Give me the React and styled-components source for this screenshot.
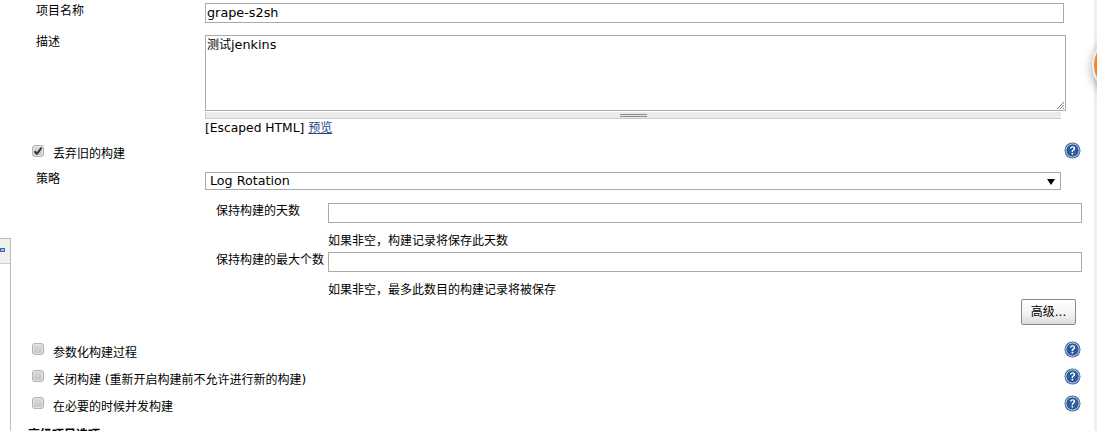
import styled, { createGlobalStyle } from "styled-components"

const Global = createGlobalStyle`
html,body{
    margin:0;
    padding:0;
    background:#fff;
    height:431px;
    overflow:hidden;
}
`
const Page = styled.div`
    position:relative;
    width:1097px;
    height:431px;
    overflow:hidden;
    color:#000;
    font-family:"DejaVu Sans","Noto Sans CJK SC",sans-serif;
    font-size:12px;
    line-height:16px;
`
const Form = styled.div`
    display:flex;
    flex-direction:column;
    padding:3px 0 0 0;
`
const Row = styled.div`
    display:grid;
    grid-template-columns:205px 1fr;
    margin-top:${p => p.$top || 0}px;
`
const Label = styled.div`
    padding-left:36px;
    margin-top:${p => p.$top || 0}px;
`
const Latin = styled.span`
    font-size:${p => p.$size || 12.8}px;
`
const TextInput = styled.div`
    box-sizing:border-box;
    width:${p => p.$width}px;
    height:${p => p.$height || 20}px;
    border:1px solid #aaa;
    padding:1px 1px;
    background:#fff;
    position:relative;
`
const Grip = styled.svg`
    position:absolute;
    right:0;
    bottom:0;
`
const Handle = styled.div`
    box-sizing:border-box;
    width:856px;
    height:7px;
    margin-top:1px;
    background:#ebebeb;
    border:1px solid #ccc;
    border-top-color:#ebebeb;
    border-width:1px 0 1px 1px;
    display:flex;
    align-items:center;
    justify-content:center;
    &::after{
        content:"";
        width:27px;
        height:1px;
        border-top:1px solid #888;
        border-bottom:1px solid #888;
    }
`
const Note = styled.div`
    margin-top:1px;
    line-height:16px;
`
const Link = styled.a`
    color:#204a87;
    text-decoration:underline;
`
const CheckRow = styled.div`
    display:flex;
    align-items:flex-start;
    height:20px;
    width:1081px;
    padding-left:32px;
    box-sizing:border-box;
    margin-top:${p => p.$top || 0}px;
`
const Box = styled.span`
    box-sizing:border-box;
    width:12px;
    height:12px;
    margin-top:${p => p.$checked ? 1 : 0}px;
    border:1px solid #b0b0b0;
    border-radius:3px;
    background:linear-gradient(#dcdcdc,#c4c4c4);
    box-shadow:inset 0 0 0 1px #e4e4e4;
    display:flex;
    align-items:center;
    justify-content:center;
    flex:none;
`
const CheckLabel = styled.span`
    margin-left:9px;
    margin-top:2px;
    flex:1;
`
const Select = styled.div`
    box-sizing:border-box;
    width:856px;
    height:18px;
    border:1px solid #aaa;
    padding:0 4px;
    display:flex;
    align-items:center;
    justify-content:space-between;
`
const Arrow = styled.span`
    width:0;
    height:0;
    margin:1px 1px 0 0;
    border-left:4px solid transparent;
    border-right:4px solid transparent;
    border-top:6px solid #000;
`
const SubRow = styled.div`
    display:grid;
    grid-template-columns:123px 1fr;
    margin-left:205px;
    margin-top:${p => p.$top || 0}px;
`
const SubLabel = styled.div`
    padding-left:11px;
    white-space:nowrap;
`
const Hint = styled.div`
    margin-left:328px;
    margin-top:10px;
`
const ButtonRow = styled.div`
    display:flex;
    justify-content:flex-end;
    width:1076px;
    margin-top:1px;
`
const Button = styled.div`
    box-sizing:border-box;
    width:55px;
    height:26px;
    border:1px solid #888;
    border-radius:2px;
    background:linear-gradient(#fff 0%,#f4f4f4 55%,#dcdcdc 100%);
    display:flex;
    align-items:center;
    justify-content:center;
`
const SectionTitle = styled.div`
    margin:10px 0 0 28px;
    font-weight:bold;
`
const SideFrame = styled.div`
    position:absolute;
    left:-1px;
    top:238px;
    width:11px;
    height:193px;
    border:1px solid #bbb;
    border-left:none;
    border-bottom:none;
`
const SideHead = styled.div`
    height:24px;
    background:#f0f0f0;
    border-bottom:1px solid #ccc;
    position:relative;
    &::after{
        content:"";
        position:absolute;
        left:1px;
        top:9px;
        width:3px;
        height:2px;
        border:1px solid #3b6cb0;
        background:#9fbbe0;
    }
`
const Strip = styled.div`
    position:absolute;
    top:0;
    right:0;
    width:3px;
    height:431px;
    background:#efefef;
`
const Orange = styled.div`
    position:absolute;
    left:1092px;
    top:35px;
    width:60px;
    height:60px;
    border-radius:50%;
    background:#f58220;
    border:2px solid #eee;
    box-sizing:border-box;
    box-shadow:-1px 3px 8px rgba(0,0,0,.3);
`
const HelpIcon = styled.svg`
    flex:none;
    margin-top:-2px;
`

const Help = () => (
    <HelpIcon width="17" height="17" viewBox="0 0 17 17">
        <circle cx="8.5" cy="8.5" r="8" fill="#3c66a4" />
        <circle cx="8.5" cy="8.5" r="6.6" fill="#2f5a9a" stroke="#c5d3e6" strokeWidth="1" />
        <path d="M5.9 6.6c0-1.5 1.2-2.4 2.7-2.4 1.5 0 2.6.9 2.6 2.2 0 1.1-.6 1.6-1.4 2.2-.6.4-.8.7-.8 1.4H7.6c0-1.1.3-1.7 1-2.2.6-.5 1-.8 1-1.4 0-.5-.4-.9-1-.9-.7 0-1.1.4-1.1 1z" fill="#fff" />
        <rect x="7.6" y="10.8" width="1.6" height="1.7" fill="#fff" />
    </HelpIcon>
)

const Check = () => (
    <svg width="10" height="10" viewBox="0 0 10 10">
        <path d="M1.5 5.2l2.4 2.6L8.6 1.6" fill="none" stroke="#333" strokeWidth="2" />
    </svg>
)

const App = () => {
    return(
        <Page>
            <Global />
            <Form>
                <Row>
                    <Label>项目名称</Label>
                    <TextInput $width={859}><Latin>grape-s2sh</Latin></TextInput>
                </Row>
                <Row $top={12}>
                    <Label $top={-1}>描述</Label>
                    <div>
                        <TextInput $width={861} $height={76}>
                            测试<Latin>jenkins</Latin>
                            <Grip width="9" height="9" viewBox="0 0 9 9">
                                <path d="M1 8L8 1M4 8L8 4M7 8L8 7" stroke="#777" fill="none" />
                            </Grip>
                        </TextInput>
                        <Handle />
                        <Note>
                            <Latin $size={12.3}>[Escaped HTML]</Latin> <Link>预览</Link>
                        </Note>
                    </div>
                </Row>
                <CheckRow $top={8}>
                    <Box $checked><Check /></Box>
                    <CheckLabel>丢弃旧的构建</CheckLabel>
                    <Help />
                </CheckRow>
                <Row $top={8}>
                    <Label $top={-1}>策略</Label>
                    <Select><Latin $size={12.7}>Log Rotation</Latin><Arrow /></Select>
                </Row>
                <SubRow $top={13}>
                    <SubLabel>保持构建的天数</SubLabel>
                    <TextInput $width={754}></TextInput>
                </SubRow>
                <Hint>如果非空，构建记录将保存此天数</Hint>
                <SubRow $top={3}>
                    <SubLabel>保持构建的最大个数</SubLabel>
                    <TextInput $width={754}></TextInput>
                </SubRow>
                <Hint>如果非空，最多此数目的构建记录将被保存</Hint>
                <ButtonRow><Button>高级...</Button></ButtonRow>
                <CheckRow $top={18}>
                    <Box />
                    <CheckLabel>参数化构建过程</CheckLabel>
                    <Help />
                </CheckRow>
                <CheckRow $top={7}>
                    <Box />
                    <CheckLabel>关闭构建 (重新开启构建前不允许进行新的构建)</CheckLabel>
                    <Help />
                </CheckRow>
                <CheckRow $top={7}>
                    <Box />
                    <CheckLabel>在必要的时候并发构建</CheckLabel>
                    <Help />
                </CheckRow>
                <SectionTitle>高级项目选项</SectionTitle>
            </Form>
            <SideFrame><SideHead /></SideFrame>
            <Strip />
            <Orange />
        </Page>
    )
}
export default App;
